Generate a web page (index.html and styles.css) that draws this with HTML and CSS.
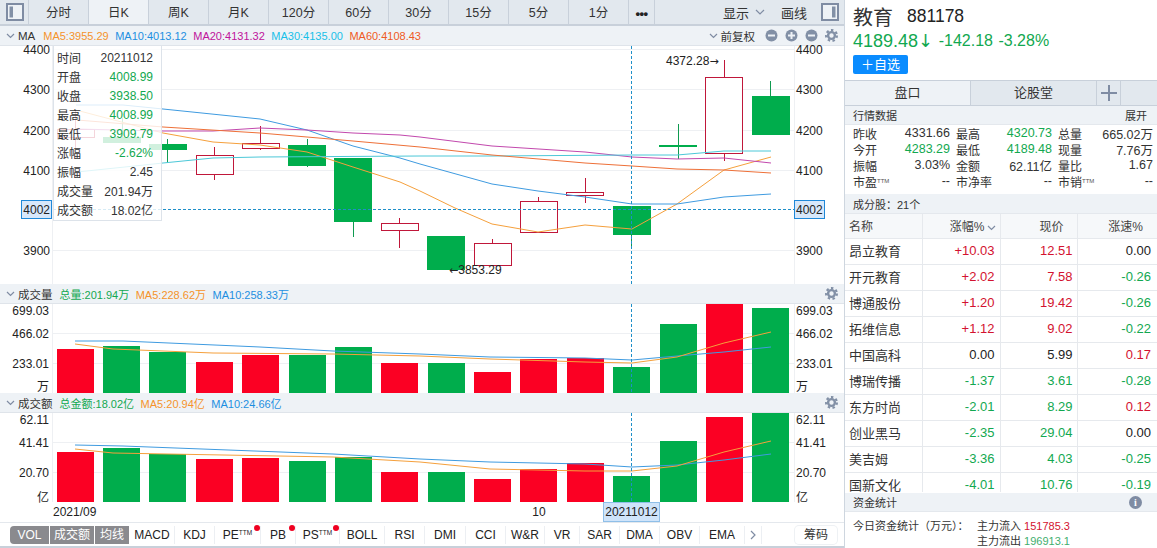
FILE: index.html
```html
<!DOCTYPE html>
<html lang="zh">
<head>
<meta charset="utf-8">
<title>教育 881178</title>
<link rel="stylesheet" href="styles.css">
</head>
<body>
<div class="app">
  <main class="left">
    <nav class="toolbar">
      <div class="side-btn"><svg width="18" height="18" viewBox="0 0 18 18"><rect x="1" y="1" width="16" height="16" class="ico-frame"/><rect x="3.5" y="3.5" width="3.5" height="11" class="ico-fill"/></svg></div>
      <div class="tab">分时</div><div class="tab active">日K</div><div class="tab">周K</div><div class="tab">月K</div><div class="tab">120分</div><div class="tab">60分</div><div class="tab">30分</div><div class="tab">15分</div><div class="tab">5分</div><div class="tab">1分</div>
      <div class="tab more">•••</div>
      <div class="tool-right">
        <span>显示</span>
        <svg class="chev-l" width="10" height="6" viewBox="0 0 10 6"><path d="M1 1l4 4 4-4" class="ico-line"/></svg>
        <span class="draw">画线</span>
        <svg class="ico-r" width="18" height="18" viewBox="0 0 18 18"><rect x="1" y="1" width="16" height="16" class="ico-frame"/><rect x="11" y="3.5" width="3.5" height="11" class="ico-fill"/></svg>
      </div>
    </nav>

    <header class="phead">
      <svg class="chev" width="9" height="6" viewBox="0 0 9 6"><path d="M1 1l3.5 3.5L8 1" class="ico-line"/></svg>
      <span class="ptitle">MA</span>
      <span class="c-o first">MA5:3955.29</span><span class="c-b">MA10:4013.12</span><span class="c-p">MA20:4131.32</span><span class="c-c">MA30:4135.00</span><span class="c-r">MA60:4108.43</span>
      <div class="phead-right">
        <svg class="chev" width="9" height="6" viewBox="0 0 9 6"><path d="M1 1l3.5 3.5L8 1" class="ico-line"/></svg>
        <span class="ptitle fq">前复权</span>
        <svg class="round" width="13" height="13" viewBox="0 0 13 13"><circle cx="6.500" cy="6.500" r="6" class="ico-fill"/><rect x="3" y="5.500" width="7" height="2" class="ico-white"/></svg>
        <svg class="round" width="13" height="13" viewBox="0 0 13 13"><circle cx="6.500" cy="6.500" r="6" class="ico-fill"/><rect x="3" y="5.500" width="7" height="2" class="ico-white"/><rect x="5.500" y="3" width="2" height="7" class="ico-white"/></svg>
        <svg class="round" width="13" height="13" viewBox="0 0 13 13"><circle cx="6.500" cy="6.500" r="6" class="ico-fill"/><rect x="3" y="5.500" width="7" height="2" class="ico-white"/></svg>
        <svg class="round gear" width="13" height="13" viewBox="0 0 13 13"><circle cx="6.500" cy="6.500" r="5.400" class="gear-teeth"/><circle cx="6.500" cy="6.500" r="3.400" class="gear-ring"/></svg>
      </div>
    </header>

    <section class="main-chart">
      <svg class="chart over" width="845" height="238" viewBox="0 46 845 238">
        <g class="grid">
          <path d="M53 49.500H794M53 89.500H794M53 130.500H794M53 170.500H794M53 250.500H794"/>
          <path d="M52.500 46V284M794.500 46V284"/>
        </g>
        <g class="wick-r"><path d="M75.500 110V148M214.500 147V180M260.500 126V150M399.500 218V248M492.500 239V243M538.500 197V201M585.500 178V203M724.500 60V161"/></g>
        <g class="wick-g"><path d="M122.500 118V143M167.500 139V163M307.500 139V167M353.500 222V237M631.500 235V247M678.500 124V159M770.500 81V96"/></g>
        <g class="cand-g">
          <rect x="103" y="137" width="38" height="6"/><rect x="149" y="144" width="38" height="6"/><rect x="288" y="145" width="38" height="21"/><rect x="334" y="158" width="38" height="64"/><rect x="427" y="236" width="38" height="34"/><rect x="613" y="206" width="38" height="29"/><rect x="659" y="145" width="38" height="2"/><rect x="752" y="96" width="38" height="39"/>
        </g>
        <g class="cand-r">
          <rect x="57.500" y="129.500" width="37" height="8"/><rect x="196.500" y="155.500" width="37" height="19"/><rect x="242.500" y="143.500" width="37" height="5"/><rect x="381.500" y="223.500" width="37" height="7"/><rect x="474.500" y="243.500" width="37" height="22"/><rect x="520.500" y="201.500" width="37" height="31"/><rect x="566.500" y="192.500" width="37" height="3"/><rect x="705.500" y="77.500" width="37" height="76"/>
        </g>
        <g class="lines">
          <polyline class="l-o" points="76,110 163,133 213,142 260,145 307,152 353,167 400,182 420,191 455,208 492,224 538,232 585,225 632,229 677,204 724,170 771,157"/>
          <polyline class="l-b" points="76,105 123,105 163,109 260,119 307,130 353,146 400,158 420,164 492,184 538,191 585,197 632,204 677,204 724,197 771,194"/>
          <polyline class="l-p" points="76,129 163,131 213,131 260,128 307,130 353,133 400,135 420,137 492,146 585,152 632,157 677,159 724,158 771,163"/>
          <polyline class="l-c" points="77,172 163,163 213,158 260,157 420,156 492,156 632,155 677,155 724,151 771,151"/>
          <polyline class="l-r" points="77,120 163,127 260,133 307,137 353,141 420,147 492,155 585,163 632,166 677,169 724,170 771,173"/>
        </g>
        <path class="cross" d="M53 209.500H794M631.500 46V284"/>
        <g class="axis">
          <text x="50" y="54" text-anchor="end">4400</text><text x="50" y="94" text-anchor="end">4300</text><text x="50" y="135" text-anchor="end">4200</text><text x="50" y="175" text-anchor="end">4100</text><text x="50" y="255" text-anchor="end">3900</text>
          <text x="796" y="54">4400</text><text x="796" y="94">4300</text><text x="796" y="135">4200</text><text x="796" y="175">4100</text><text x="796" y="255">3900</text>
          <rect class="mark" x="21.500" y="200.500" width="30" height="18"/><rect class="mark" x="794.500" y="200.500" width="30" height="18"/>
          <text x="50" y="214" text-anchor="end">4002</text><text x="796" y="214">4002</text>
          <text x="666" y="65">4372.28<tspan class="arrow">→</tspan></text><text x="449" y="274"><tspan class="arrow">←</tspan>3853.29</text>
        </g>
      </svg>
      <aside class="tip">
        <span>时间</span><b>20211012</b>
        <span>开盘</span><b class="g">4008.99</b>
        <span>收盘</span><b class="g">3938.50</b>
        <span>最高</span><b class="g">4008.99</b>
        <span>最低</span><b class="g">3909.79</b>
        <span>涨幅</span><b class="g">-2.62%</b>
        <span>振幅</span><b>2.45</b>
        <span>成交量</span><b>201.94万</b>
        <span>成交额</span><b>18.02亿</b>
      </aside>
    </section>

    <header class="phead">
      <svg class="chev" width="9" height="6" viewBox="0 0 9 6"><path d="M1 1l3.500 3.500L8 1" class="ico-line"/></svg>
      <span class="ptitle">成交量</span>
      <span class="c-g first2">总量:201.94万</span><span class="c-o">MA5:228.62万</span><span class="c-b">MA10:258.33万</span>
      <div class="phead-right"><svg class="round gear" width="13" height="13" viewBox="0 0 13 13"><circle cx="6.500" cy="6.500" r="5.400" class="gear-teeth"/><circle cx="6.500" cy="6.500" r="3.400" class="gear-ring"/></svg></div>
    </header>
    <svg class="chart" width="845" height="89" viewBox="0 304 845 89">
      <g class="grid"><path d="M53 333.500H794M53 363.500H794M52.500 304V393M794.500 304V393"/></g>
      <g class="bar-r"><rect x="57" y="349" width="37" height="44"/><rect x="196" y="362" width="37" height="31"/><rect x="242" y="355" width="37" height="38"/><rect x="381" y="363" width="37" height="30"/><rect x="474" y="372" width="37" height="21"/><rect x="520" y="359" width="37" height="34"/><rect x="567" y="358" width="37" height="35"/><rect x="706" y="304" width="37" height="89"/></g>
      <g class="bar-g"><rect x="103" y="346" width="37" height="47"/><rect x="149" y="352" width="37" height="41"/><rect x="289" y="355" width="37" height="38"/><rect x="335" y="347" width="37" height="46"/><rect x="428" y="363" width="37" height="30"/><rect x="613" y="367" width="37" height="26"/><rect x="660" y="324" width="37" height="69"/><rect x="752" y="308" width="37" height="85"/></g>
      <g class="lines">
        <polyline class="l-b" points="75,341 123,341 260,347 333,351 420,354 490,357 585,358 632,360 677,356 724,352 771,347"/>
        <polyline class="l-o" points="75,344 113,349 213,353 333,354 420,356 490,359 585,362 632,363 677,357 724,343 771,332"/>
      </g>
      <path class="cross" d="M631.500 304V393"/>
      <g class="axis">
        <text x="49" y="315" text-anchor="end">699.03</text><text x="49" y="338" text-anchor="end">466.02</text><text x="49" y="368" text-anchor="end">233.01</text><text x="49" y="391" text-anchor="end">万</text>
        <text x="796" y="315">699.03</text><text x="796" y="338">466.02</text><text x="796" y="368">233.01</text><text x="796" y="391">万</text>
      </g>
    </svg>

    <header class="phead">
      <svg class="chev" width="9" height="6" viewBox="0 0 9 6"><path d="M1 1l3.500 3.500L8 1" class="ico-line"/></svg>
      <span class="ptitle">成交额</span>
      <span class="c-g first2">总金额:18.02亿</span><span class="c-o">MA5:20.94亿</span><span class="c-b">MA10:24.66亿</span>
      <div class="phead-right"><svg class="round gear" width="13" height="13" viewBox="0 0 13 13"><circle cx="6.500" cy="6.500" r="5.400" class="gear-teeth"/><circle cx="6.500" cy="6.500" r="3.400" class="gear-ring"/></svg></div>
    </header>
    <svg class="chart" width="845" height="109" viewBox="0 413 845 109">
      <g class="grid"><path d="M53 442.500H794M53 472.500H794M52.500 413V502M794.500 413V502"/></g>
      <g class="bar-r"><rect x="57" y="452" width="37" height="50"/><rect x="196" y="459" width="37" height="43"/><rect x="242" y="458" width="37" height="44"/><rect x="381" y="472" width="37" height="30"/><rect x="474" y="479" width="37" height="23"/><rect x="520" y="469" width="37" height="33"/><rect x="567" y="463" width="37" height="39"/><rect x="706" y="417" width="37" height="85"/></g>
      <g class="bar-g"><rect x="103" y="448" width="37" height="54"/><rect x="149" y="454" width="37" height="48"/><rect x="289" y="461" width="37" height="41"/><rect x="335" y="457" width="37" height="45"/><rect x="428" y="472" width="37" height="30"/><rect x="613" y="476" width="37" height="26"/><rect x="660" y="441" width="37" height="61"/><rect x="752" y="413" width="37" height="89"/></g>
      <g class="lines">
        <polyline class="l-b" points="75,445 123,446 333,454 420,459 490,462 585,464 632,467 677,465 724,460 771,454"/>
        <polyline class="l-o" points="75,449 113,453 333,457 420,462 490,469 585,471 632,471 677,466 724,452 771,441"/>
      </g>
      <path class="cross" d="M631.500 413V502"/>
      <g class="axis">
        <text x="49" y="424" text-anchor="end">62.11</text><text x="49" y="447" text-anchor="end">41.41</text><text x="49" y="477" text-anchor="end">20.70</text><text x="49" y="502" text-anchor="end">亿</text>
        <text x="796" y="424">62.11</text><text x="796" y="447">41.41</text><text x="796" y="477">20.70</text><text x="796" y="502">亿</text>
        <text x="53" y="516">2021/09</text><text x="539" y="516" text-anchor="middle">10</text>
        <rect class="mark-date" x="603.500" y="502.500" width="56" height="19"/>
        <text x="631.500" y="516" text-anchor="middle">20211012</text>
      </g>
    </svg>

    <footer class="indbar">
      <div class="pill w39">VOL</div><div class="pill w44">成交额</div><div class="pill w34">均线</div>
      <div class="ind w45">MACD</div><div class="ind w40">KDJ</div>
      <div class="ind w46">PE<sup>TTM</sup><i class="dot"></i></div>
      <div class="ind w35">PB<i class="dot"></i></div>
      <div class="ind w44">PS<sup>TTM</sup><i class="dot"></i></div>
      <div class="ind w45">BOLL</div><div class="ind w40">RSI</div><div class="ind w41">DMI</div><div class="ind w40">CCI</div><div class="ind w39">W&amp;R</div><div class="ind w35">VR</div><div class="ind w40">SAR</div><div class="ind w40">DMA</div><div class="ind w40">OBV</div><div class="ind w45">EMA</div>
      <div class="ind w17"><svg width="6" height="10" viewBox="0 0 6 10"><path d="M1 1l4 4-4 4" class="ico-line"/></svg></div>
      <div class="chip">筹码</div>
    </footer>
  </main>

  <aside class="right">
    <div class="title">
      <div class="name-row"><span class="name">教育</span><span class="code">881178</span></div>
      <div class="price-row"><span class="price">4189.48<span class="price-arrow">↓</span></span><span>-142.18</span><span>-3.28%</span></div>
      <button class="fav">＋自选</button>
    </div>
    <div class="rtabs">
      <div class="rtab on">盘口</div><div class="rtab">论股堂</div>
      <div class="rplus"><svg width="16" height="16" viewBox="0 0 16 16"><path d="M8 0V16M0 8H16" class="plus"/></svg></div>
      <div class="rrest"></div>
    </div>
    <div class="sec"><span>行情数据</span><span>展开</span></div>
    <div class="stats">
      <span>昨收</span><b>4331.66</b><span>最高</span><b class="g">4320.73</b><span>总量</span><b>665.02万</b>
      <span>今开</span><b class="g">4283.29</b><span>最低</span><b class="g">4189.48</b><span>现量</span><b>7.76万</b>
      <span>振幅</span><b>3.03%</b><span>金额</span><b>62.11亿</b><span>量比</span><b>1.67</b>
      <span>市盈<sup>TTM</sup></span><b>--</b><span>市净率</span><b>--</b><span>市销<sup>TTM</sup></span><b>--</b>
    </div>
    <div class="sec sec2"><span>成分股：21个</span></div>
    <div class="tbl-wrap">
      <table class="tbl">
        <thead><tr><th>名称</th><th>涨幅%<svg class="sort" width="9" height="6" viewBox="0 0 9 6"><path d="M1 1l3.500 3.500L8 1" class="ico-line"/></svg></th><th>现价</th><th>涨速%</th></tr></thead>
        <tbody>
          <tr><td>昂立教育</td><td class="r">+10.03</td><td class="r">12.51</td><td>0.00</td></tr>
          <tr><td>开元教育</td><td class="r">+2.02</td><td class="r">7.58</td><td class="g">-0.26</td></tr>
          <tr><td>博通股份</td><td class="r">+1.20</td><td class="r">19.42</td><td class="g">-0.26</td></tr>
          <tr><td>拓维信息</td><td class="r">+1.12</td><td class="r">9.02</td><td class="g">-0.22</td></tr>
          <tr><td>中国高科</td><td>0.00</td><td>5.99</td><td class="r">0.17</td></tr>
          <tr><td>博瑞传播</td><td class="g">-1.37</td><td class="g">3.61</td><td class="g">-0.28</td></tr>
          <tr><td>东方时尚</td><td class="g">-2.01</td><td class="g">8.29</td><td class="r">0.12</td></tr>
          <tr><td>创业黑马</td><td class="g">-2.35</td><td class="g">29.04</td><td>0.00</td></tr>
          <tr><td>美吉姆</td><td class="g">-3.36</td><td class="g">4.03</td><td class="g">-0.25</td></tr>
          <tr><td>国新文化</td><td class="g">-4.01</td><td class="g">10.76</td><td class="g">-0.19</td></tr>
        </tbody>
      </table>
    </div>
    <div class="sec sec3"><span>资金统计</span><span class="info">i</span></div>
    <div class="flow">
      <div class="flow-label">今日资金统计（万元）：</div>
      <div class="flow-vals">
        <div>主力流入 <span class="r">151785.3</span></div>
        <div>主力流出 <span class="g2">196913.1</span></div>
      </div>
    </div>
  </aside>
</div>
</body>
</html>
```

FILE: styles.css
```css
* { box-sizing: border-box; }
html, body { margin: 0; padding: 0; height: 548px; overflow: hidden; background: #fff; }
body { font-family: "Liberation Sans", "Noto Sans CJK SC", sans-serif; font-size: 12px; color: #222; }

.app { display: flex; width: 1157px; height: 548px; }
.left { width: 845px; flex: none; border-right: 1px solid #ced6df; display: flex; flex-direction: column; }
.right { flex: 1; min-width: 0; display: flex; flex-direction: column; }

/* toolbar */
.toolbar { display: flex; height: 26px; flex: none; background: #e2e8ee; border-bottom: 2px solid #c8d0da; }
.side-btn { width: 29px; padding: 3px 0 0 6px; border-right: 1px solid #c8d0da; }
.tab { width: 60px; text-align: center; line-height: 27px; font-size: 12.5px; border-right: 1px solid #c8d0da; color: #333; }
.tab.active { background: #eef2f6; }
.tab.more { width: 26px; font-size: 13px; font-weight: 700; letter-spacing: -0.5px; color: #222; }
.tool-right { flex: 1; display: flex; align-items: center; padding-left: 68px; font-size: 13px; color: #333; }
.chev-l { margin-left: 6px; }
.draw { margin-left: 16px; }
.ico-r { margin-left: 14px; }
.ico-frame { fill: #eef2f6; stroke: #7f8ca3; stroke-width: 2; }
.ico-fill { fill: #8290a6; }
.ico-white { fill: #eef2f6; }
.ico-line { fill: none; stroke: #7f8ca3; stroke-width: 1.2; }
.gear-teeth { fill: none; stroke: #8290a6; stroke-width: 2.2; stroke-dasharray: 2.4 2.45; }
.gear-ring { fill: none; stroke: #8290a6; stroke-width: 2.4; }
.plus { stroke: #7f8ca3; stroke-width: 2; }

/* panel headers */
.phead { display: flex; align-items: center; height: 20px; flex: none; background: #eef2f6; border-bottom: 1px solid #dfe4ea; padding-left: 6px; font-size: 11px; white-space: nowrap; }
.chev { margin-right: 3px; flex: none; }
.ptitle { font-size: 11.5px; color: #333; }
.phead > span + span { margin-left: 6.500px; }
.phead > .first { margin-left: 8px; }
.phead > .first2 { margin-left: 7px; }
.phead-right { margin-left: auto; display: flex; align-items: center; padding-right: 6px; }
.fq { margin-right: 3px; }
.round { margin-left: 7px; flex: none; }
.c-o { color: #f5922b; } .c-b { color: #1d8fe1; } .c-p { color: #c0149b; } .c-c { color: #18c0e8; } .c-r { color: #ee5a24; } .c-g { color: #12a850; }

/* charts */
.main-chart { position: relative; height: 238px; flex: none; }
.chart { display: block; flex: none; }
.chart.over { overflow: visible; }
.grid path { fill: none; stroke: #eef0f3; stroke-width: 1; }
.wick-r path { fill: none; stroke: #c0173a; stroke-width: 1; }
.wick-g path { fill: none; stroke: #0f9a50; stroke-width: 1; }
.cand-g rect { fill: #00ad4c; }
.cand-r rect { fill: #fff; stroke: #c0173a; stroke-width: 1; }
.bar-r rect { fill: #fb0023; }
.bar-g rect { fill: #00ad4c; }
.lines polyline { fill: none; stroke-width: 1; }
.l-o { stroke: #f5a03c; } .l-b { stroke: #3f9be0; } .l-p { stroke: #c248ad; } .l-c { stroke: #4cc8d8; } .l-r { stroke: #ee7038; }
.cross { fill: none; stroke: #1f8fc8; stroke-width: 1; stroke-dasharray: 3 2; }
.axis text { font-size: 12px; fill: #222; font-family: "Liberation Sans", "Noto Sans CJK SC", sans-serif; }
.axis .arrow { font-family: "DejaVu Sans", sans-serif; font-size: 11px; }
.mark { fill: #d7e8fb; stroke: #1f88d8; }
.mark-date { fill: #cfe4fa; stroke: #8fbfe8; }

.tip { position: absolute; left: 53px; top: 0; width: 109px; height: 175px; display: grid; grid-template-columns: auto 1fr; grid-auto-rows: 19px; align-items: center; padding: 2px 8px 0 3px; background: rgba(255,255,255,.82); border: 1px solid #dde3ea; border-top: 0; font-size: 12px; color: #333; }
.tip b { font-weight: 400; text-align: right; }
.g { color: #12a850; }
.r { color: #d3122f; }
.g2 { color: #3fae6e; }

/* indicator bar */
.indbar { display: flex; align-items: center; height: 26px; flex: none; padding-left: 10px; padding-top: 1px; background: #fff; border-top: 1px solid #e4e8ed; border-bottom: 2px solid #c8d0da; font-size: 12px; color: #222; position: relative; }
.pill { height: 18px; line-height: 18px; text-align: center; background: #8a8a8e; color: #fff; margin-right: 1px; flex: none; }
.pill:first-child { border-radius: 4px 0 0 4px; }
.ind { height: 18px; line-height: 18px; text-align: center; border-right: 1px solid #eceff3; flex: none; position: relative; }
.ind sup { font-size: 6.500px; vertical-align: 4px; line-height: 0; }
.ind svg { vertical-align: -1px; }
.dot { position: absolute; top: -1px; right: 0; width: 6px; height: 6px; border-radius: 50%; background: #ef0020; }
.w17 { width: 17px; } .w34 { width: 34px; } .w35 { width: 35px; } .w39 { width: 39px; } .w40 { width: 40px; } .w41 { width: 41px; } .w44 { width: 44px; } .w45 { width: 45px; } .w46 { width: 46px; }
.chip { margin-left: 33px; width: 42px; height: 18px; line-height: 18px; text-align: center; background: #fff; border-radius: 4px; box-shadow: 0 0 0 1px #eef1f4; color: #333; flex: none; }

/* right panel */
.title { height: 80px; flex: none; padding: 4px 0 0 8px; }
.name-row { display: flex; align-items: center; height: 25px; }
.name { font-size: 20px; color: #333; }
.code { font-size: 17.5px; margin-left: 14px; color: #222; }
.price-row { display: flex; align-items: center; height: 24px; margin-top: 0; color: #12a850; font-size: 16px; gap: 5.5px; }
.price { font-size: 18px; }
.price-arrow { font-family: "DejaVu Sans", sans-serif; }
.fav { display: block; width: 55px; height: 19px; margin: 2px 0 0; padding: 0; border: 0; border-radius: 2px; background: #0a8cff; color: #fff; font: 13px "Liberation Sans", "Noto Sans CJK SC", sans-serif; line-height: 19px; }
.rtabs { display: flex; height: 26px; flex: none; border-top: 1px solid #c8d0da; border-bottom: 1px solid #c8d0da; background: #e2e8ee; }
.rtab { width: 126px; text-align: center; line-height: 24px; font-size: 13px; border-right: 1px solid #c8d0da; color: #333; }
.rtab.on { background: #eef2f6; }
.rplus { width: 24px; padding: 4px 0 0 4px; border-right: 1px solid #c8d0da; }
.rrest { flex: 1; }
.sec { display: flex; justify-content: space-between; align-items: center; height: 19px; flex: none; padding: 0 10px 0 8px; background: #eef2f6; font-size: 11px; color: #333; border-bottom: 1px solid #e4e8ed; }
.stats { height: 69px; flex: none; padding: 0 0 0 2px; display: grid; grid-template-columns: 36px 67px 36px 66px 36px 65px; grid-template-rows: repeat(4, 16px); align-content: start; align-items: center; font-size: 12px; color: #333; white-space: nowrap; }
.stats span { margin-left: 6px; }
.stats b { font-weight: 400; font-size: 12.5px; text-align: right; }
.stats sup { font-size: 6px; vertical-align: 4px; line-height: 0; color: #555; }
.sec2 { height: 20px; }
.tbl-wrap { height: 278px; flex: none; overflow: hidden; }
.tbl { width: 312px; border-collapse: collapse; table-layout: fixed; }
.tbl th { height: 24px; padding: 0 7px 0 4px; font-weight: 400; font-size: 12px; color: #444; text-align: right; background: #f6f8fa; border-right: 1px solid #e6e9ed; border-bottom: 1px solid #e6e9ed; }
.tbl th:first-child { width: 77px; text-align: left; }
.tbl th:nth-child(2) { width: 78px; padding-right: 4px; }
.tbl th:nth-child(3) { width: 77px; padding-right: 13px; }
.tbl th:last-child { border-right: 0; padding-right: 14px; }
.sort { margin-left: 2px; }
.tbl td { height: 26px; padding: 0 5px 2px 4px; font-size: 13px; text-align: right; border-right: 1px solid #e6e9ed; border-bottom: 1px solid #e6e9ed; color: #222; white-space: nowrap; }
.tbl td:nth-child(3) { padding-right: 4px; }
.tbl td:first-child { text-align: left; font-size: 13px; color: #333; }
.tbl td:last-child { border-right: 0; padding-right: 6px; }
.tbl td.g { color: #12a850; }
.tbl td.r { color: #d3122f; }
.sec3 { margin-top: 1px; padding-right: 15px; }
.info { width: 13px; height: 13px; border-radius: 50%; background: #7f8ca3; color: #fff; font: 700 10px/13px "Liberation Serif", serif; text-align: center; }
.flow { display: flex; padding: 7px 0 0 8px; font-size: 11px; line-height: 15px; color: #333; }
.flow-label { width: 124px; flex: none; }
.flow-vals { white-space: nowrap; }
```
